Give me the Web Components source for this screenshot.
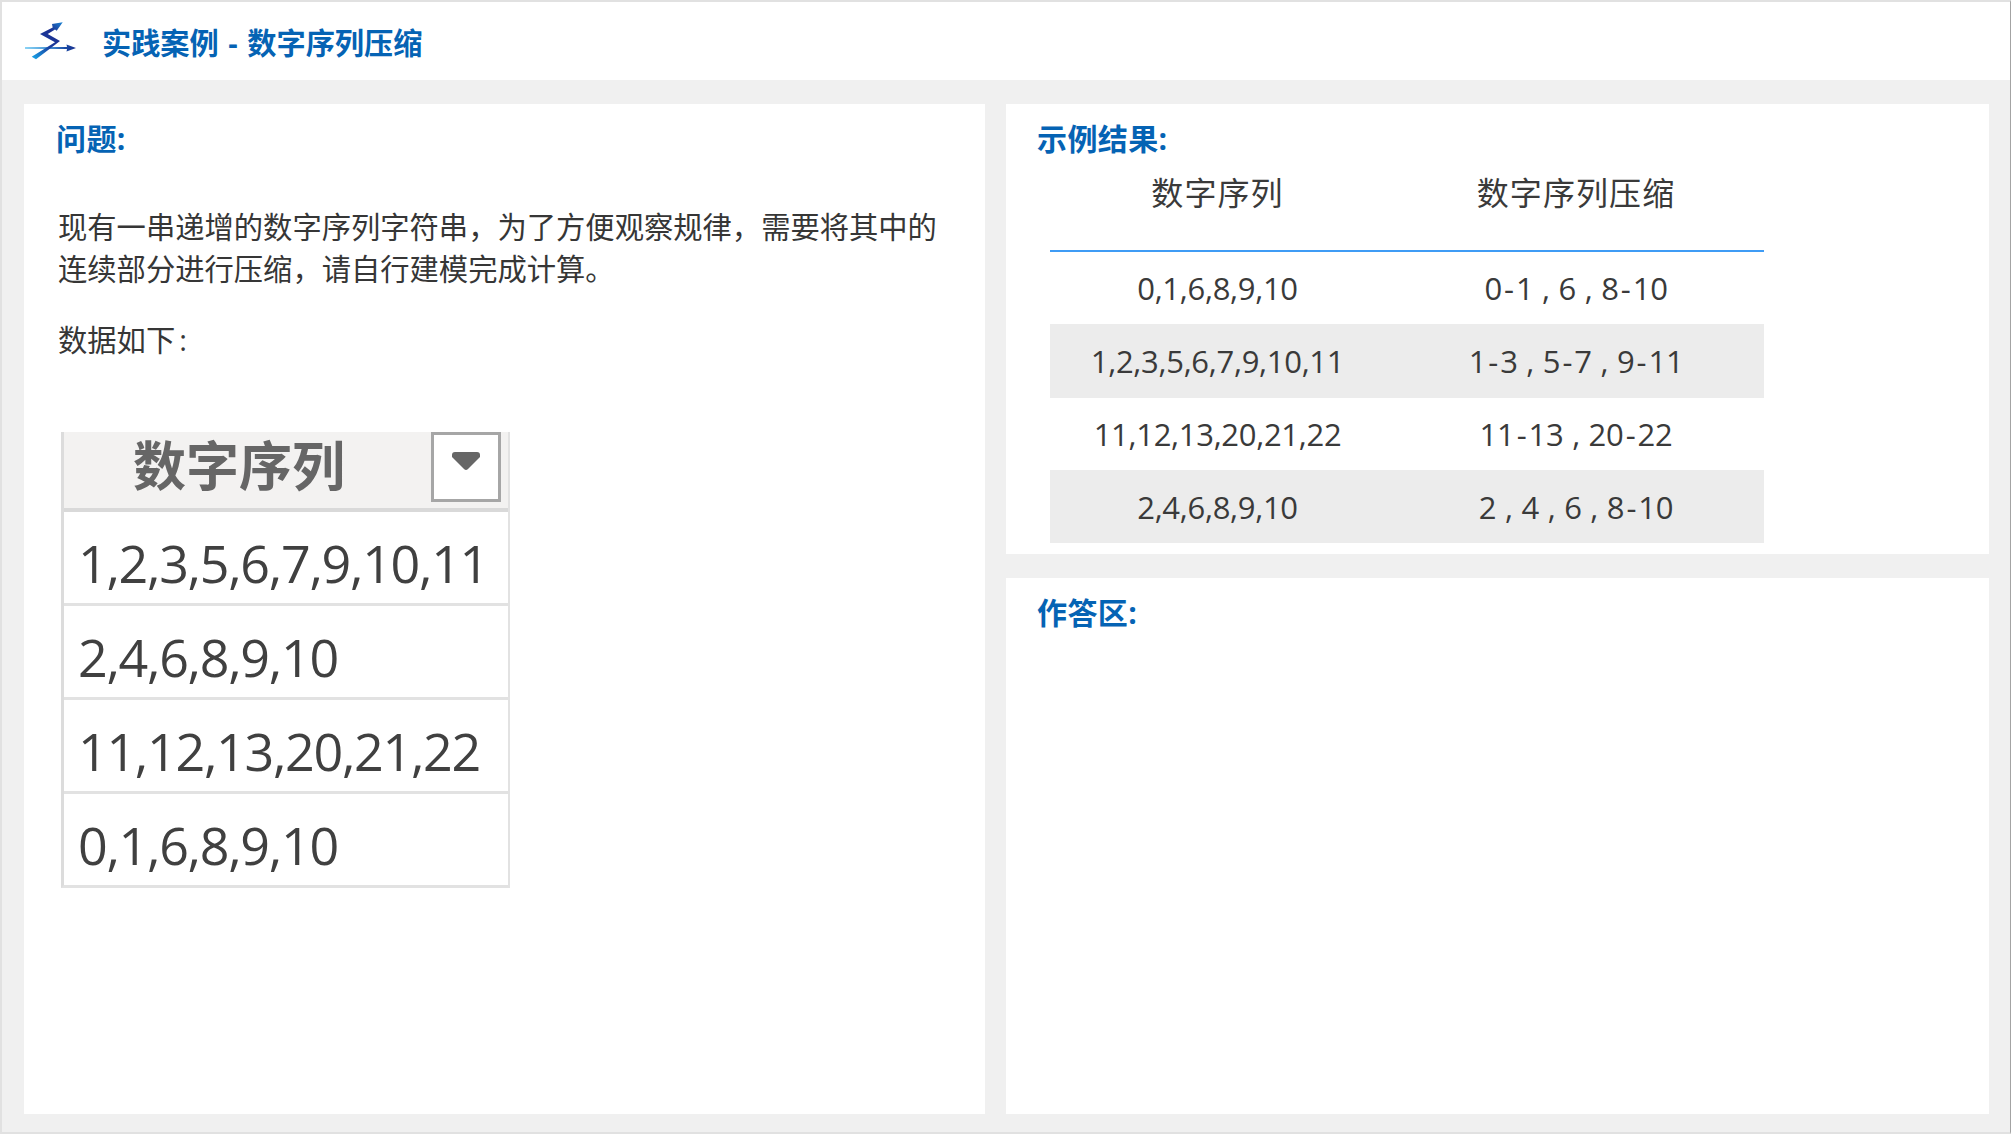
<!DOCTYPE html>
<html lang="zh">
<head>
<meta charset="utf-8">
<title>实践案例 - 数字序列压缩</title>
<style>
    html, body { margin: 0; padding: 0; height: 100%; }
    body { font-family: "Open Sans", "Noto Sans CJK SC", sans-serif; }
    .intro {
        margin: 45px 0 0 2px;
        color: #363636;
        font-size: 29.3px;
        line-height: 42px;
    }
    .intro.second { margin-top: 29px; }
    .intro b { font-weight: 400; letter-spacing: 4px; }
</style>
</head>
<body>
<case-page>
    <case-header slot="header">实践案例 - 数字序列压缩</case-header>

    <case-panel slot="left" heading="问题:">
        <p class="intro">现有一串递增的数字序列字符串，为了方便观察规律，需要将其中的连续部分进行压缩，请自行建模完成计算。</p>
        <p class="intro second">数据如<b>下</b>:</p>
        <source-grid title-text="数字序列" values="1,2,3,5,6,7,9,10,11|2,4,6,8,9,10|11,12,13,20,21,22|0,1,6,8,9,10"></source-grid>
    </case-panel>

    <case-panel slot="result" heading="示例结果:">
        <result-table>
            <result-row head a="数字序列" b="数字序列压缩"></result-row>
            <result-row a="0,1,6,8,9,10" b="0-1 , 6 , 8-10"></result-row>
            <result-row shaded a="1,2,3,5,6,7,9,10,11" b="1-3 , 5-7 , 9-11"></result-row>
            <result-row a="11,12,13,20,21,22" b="11-13 , 20-22"></result-row>
            <result-row shaded a="2,4,6,8,9,10" b="2 , 4 , 6 , 8-10"></result-row>
        </result-table>
    </case-panel>

    <case-panel slot="answer" heading="作答区:"></case-panel>
</case-page>

<script>
const FONT = '"Open Sans", "Noto Sans CJK SC", sans-serif';
const BLUE = '#0563b4';

class CasePage extends HTMLElement {
    constructor() {
        super();
        this.attachShadow({ mode: 'open' }).innerHTML = `
            <style>
                :host {
                    display: flex;
                    flex-direction: column;
                    box-sizing: border-box;
                    width: 100%;
                    height: 1134px;
                    border: 2px solid #e1e1e1;
                    border-right: 1px solid #a3a3a3;
                    background: #f0f0f0;
                    font-family: ${FONT};
                }
                .body {
                    flex: 1;
                    display: grid;
                    grid-template-columns: 961px 983px;
                    column-gap: 21px;
                    padding: 24px 21px 18px 22px;
                    min-height: 0;
                }
                .right {
                    display: grid;
                    grid-template-rows: 450px 1fr;
                    row-gap: 24px;
                    min-height: 0;
                }
            </style>
            <slot name="header"></slot>
            <div class="body">
                <slot name="left"></slot>
                <div class="right">
                    <slot name="result"></slot>
                    <slot name="answer"></slot>
                </div>
            </div>
        `;
    }
}

class CaseHeader extends HTMLElement {
    constructor() {
        super();
        this.attachShadow({ mode: 'open' }).innerHTML = `
            <style>
                :host {
                    display: flex;
                    align-items: center;
                    height: 78px;
                    background: #fff;
                    padding-left: 22px;
                    color: ${BLUE};
                    font-size: 29.2px;
                    font-weight: 700;
                    word-spacing: 2px;
                }
                svg { width: 56px; height: 44px; flex: none; margin-right: 22px; margin-top: -2px; }
                .title { margin-top: 0; }
            </style>
            <svg viewBox="24 18 56 44">
                <defs>
                    <linearGradient id="flat" gradientUnits="userSpaceOnUse" x1="25" y1="0" x2="76" y2="0">
                        <stop offset="0" stop-color="#19a7ea"/>
                        <stop offset="0.5" stop-color="#1570c4"/>
                        <stop offset="1" stop-color="#1a2f8e"/>
                    </linearGradient>
                    <linearGradient id="zig" gradientUnits="userSpaceOnUse" x1="32" y1="58" x2="62" y2="23">
                        <stop offset="0" stop-color="#18a4e8"/>
                        <stop offset="0.45" stop-color="#1a3a9c"/>
                        <stop offset="0.72" stop-color="#1c2f90"/>
                        <stop offset="1" stop-color="#1b7fd0"/>
                    </linearGradient>
                </defs>
                <path d="M25 47.4 L67 46.9 L66.5 44.5 L76 48 L66.5 51.5 L67 49.1 L25 48.6 Z" fill="url(#flat)"/>
                <path d="M31.7 56.7 L55 42.3 L40 34 L52.7 27.5 L52 24 L62.7 22.3 L56.7 30.7 L55 29.5 L47.7 34 L60 41 L36 59.3 Z" fill="url(#zig)"/>
            </svg>
            <span class="title"><slot></slot></span>
        `;
    }
}

class CasePanel extends HTMLElement {
    constructor() {
        super();
        this.attachShadow({ mode: 'open' }).innerHTML = `
            <style>
                :host {
                    display: block;
                    box-sizing: border-box;
                    height: 100%;
                    background: #fff;
                    padding: 13px 33px 0 32px;
                }
                :host([slot="result"]), :host([slot="answer"]) { padding-left: 31px; }
                h2 {
                    margin: 0;
                    color: ${BLUE};
                    font-size: 30px;
                    letter-spacing: 0.4px;
                    line-height: 44px;
                    font-weight: 700;
                }
            </style>
            <h2></h2>
            <slot></slot>
        `;
        this.shadowRoot.querySelector('h2').textContent = this.getAttribute('heading');
    }
}

class ResultTable extends HTMLElement {
    constructor() {
        super();
        this.attachShadow({ mode: 'open' }).innerHTML = `
            <style>
                :host {
                    display: block;
                    width: 714px;
                    margin-left: 13px;
                }
            </style>
            <slot></slot>
        `;
    }
}

class ResultRow extends HTMLElement {
    constructor() {
        super();
        this.attachShadow({ mode: 'open' }).innerHTML = `
            <style>
                :host {
                    display: grid;
                    grid-template-columns: 335px 379px;
                    align-items: center;
                    height: 72px;
                    color: #3a3a3a;
                    font-size: 31px;
                    letter-spacing: -0.3px;
                    word-spacing: 1px;
                    text-align: center;
                }
                :host([shaded]) { background: #ececec; height: 74px; }
                :host(:last-child) { height: 73px; }
                :host([head]) {
                    height: 79px;
                    padding-top: 10px;
                    align-items: start;
                    border-bottom: 2px solid #3f9cf5;
                    font-size: 32px;
                    letter-spacing: 1.1px;
                    line-height: 44px;
                }
                .b { padding-left: 3px; }
                i { font-style: normal; margin: 0 2.2px; }
            </style>
            <div class="a"></div>
            <div class="b"></div>
        `;
        this.shadowRoot.querySelector('.a').textContent = this.getAttribute('a');
        this.shadowRoot.querySelector('.b').innerHTML = this.getAttribute('b').replace(/-/g, '<i>-</i>');
    }
}

class SourceGrid extends HTMLElement {
    constructor() {
        super();
        const rows = this.getAttribute('values').split('|');
        this.attachShadow({ mode: 'open' }).innerHTML = `
            <style>
                :host {
                    display: block;
                    box-sizing: border-box;
                    width: 449px;
                    margin: 71px 0 0 5px;
                    border-left: 3px solid #dcdcdc;
                    border-right: 2px solid #e2e2e2;
                    border-bottom: 3px solid #e2e2e2;
                }
                .top {
                    display: flex;
                    justify-content: space-between;
                    height: 80px;
                    box-sizing: border-box;
                    background: #f3f2f1;
                    border-bottom: 4px solid #d9d9d9;
                    padding-right: 7px;
                }
                .name {
                    margin-left: 69px;
                    color: #666;
                    font-size: 53px;
                    font-weight: 700;
                    line-height: 68px;
                }
                .drop {
                    display: flex;
                    justify-content: center;
                    box-sizing: border-box;
                    width: 70px;
                    height: 70px;
                    background: #fff;
                    border: 3px solid #a6a6a6;
                    padding-top: 16px;
                }
                .drop svg { width: 28px; height: 20px; }
                .row {
                    box-sizing: border-box;
                    height: 94px;
                    padding: 13px 0 0 14px;
                    color: #404040;
                    font-size: 52px;
                    letter-spacing: -1.3px;
                    line-height: 76px;
                    border-bottom: 3px solid #e2e2e2;
                }
                .row:last-child { border-bottom: none; height: 91px; }
            </style>
            <div class="top">
                <span class="name"></span>
                <span class="drop">
                    <svg viewBox="0 0 28 20"><path d="M3 1 H25 Q28 1 28 4 V6 L16 18 Q14 20 12 18 L0 6 V4 Q0 1 3 1 Z" fill="#666"/></svg>
                </span>
            </div>
            ${rows.map(v => `<div class="row">${v}</div>`).join('')}
        `;
        this.shadowRoot.querySelector('.name').textContent = this.getAttribute('title-text');
    }
}

customElements.define('case-page', CasePage);
customElements.define('case-header', CaseHeader);
customElements.define('case-panel', CasePanel);
customElements.define('result-table', ResultTable);
customElements.define('result-row', ResultRow);
customElements.define('source-grid', SourceGrid);
</script>
</body>
</html>
